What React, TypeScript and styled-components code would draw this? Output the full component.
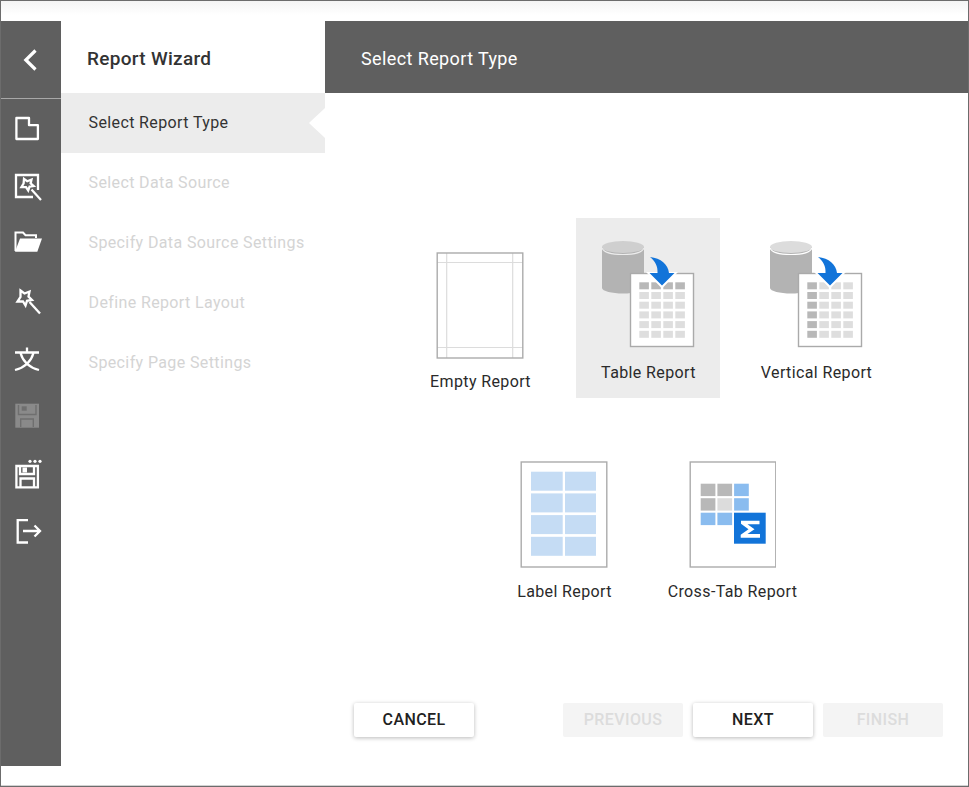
import React from "react";
import styled, { createGlobalStyle } from "styled-components";

const Global = createGlobalStyle`
  html, body { margin: 0; padding: 0; background: #fff; }
  body { font-family: Roboto, "Liberation Sans", sans-serif; color: #212121; }
  * { box-sizing: border-box; }
`;

const Frame = styled.div`
  width: 969px;
  height: 787px;
  border: 1px solid #6c6c6c;
  padding-top: 20px;
  padding-bottom: 20px;
  display: flex;
  overflow: hidden;
  background: linear-gradient(#f4f4f4, #fff 14px);
  box-shadow: inset 0 -1px 0 #d2d2d2;
`;
const Rail = styled.nav`
  width: 60px;
  flex: none;
  background: #5f5f5f;
  display: flex;
  flex-direction: column;
`;
const BackCell = styled.div`
  height: 78px;
  flex: none;
  border-bottom: 1px solid #a8a8a8;
  display: flex;
  align-items: center;
  padding-left: 12px;
`;
const RailCell = styled.div`
  height: 57.7px;
  flex: none;
  display: flex;
  align-items: center;
  padding-left: 12px;
`;
const RailSvg = styled.svg<{ $muted?: boolean }>`
  width: 32px;
  height: 32px;
  display: block;
  overflow: visible;
  color: ${(p) => (p.$muted ? "#8a8a8a" : "#fff")};
`;
const Steps = styled.aside`
  width: 264px;
  flex: none;
  display: flex;
  flex-direction: column;
  background: #fff;
`;
const WizardTitle = styled.div`
  height: 72px;
  flex: none;
  display: flex;
  align-items: center;
  padding: 2px 0 0 26px;
  font-size: 19px;
  font-weight: 500;
  letter-spacing: 0.3px;
  color: #333;
`;
const Step = styled.div<{ $active?: boolean }>`
  height: 60px;
  flex: none;
  display: flex;
  align-items: center;
  padding: 0 0 2px 27.5px;
  font-size: 16px;
  letter-spacing: 0.38px;
  color: ${(p) => (p.$active ? "#333" : "#d4d4d4")};
  background: ${(p) => (p.$active ? "#ececec" : "transparent")};
  position: relative;
`;
const Notch = styled.span`
  position: absolute;
  right: 0;
  top: 15px;
  width: 0;
  height: 0;
  border-top: 15px solid transparent;
  border-bottom: 15px solid transparent;
  border-right: 16px solid #fff;
`;
const Main = styled.main`
  flex: 1;
  display: flex;
  flex-direction: column;
  min-width: 0;
  background: #fff;
`;
const Header = styled.header`
  height: 72px;
  flex: none;
  background: #5f5f5f;
  color: #fff;
  font-size: 18px;
  letter-spacing: 0.39px;
  display: flex;
  align-items: center;
  padding: 2px 0 0 36px;
`;
const Gallery = styled.section`
  flex: none;
  height: 482px;
  padding-top: 125px;
  display: flex;
  flex-direction: column;
  gap: 24px;
  padding-left: 57px;
  width: 588px;
  align-items: center;
`;
const TileRow = styled.div`
  display: flex;
  gap: 24px;
  justify-content: center;
`;
const Tile = styled.div<{ $selected?: boolean; $top: number; $gap: number }>`
  width: 144px;
  height: 180px;
  flex: none;
  display: flex;
  flex-direction: column;
  align-items: center;
  padding-top: ${(p) => p.$top}px;
  gap: ${(p) => p.$gap}px;
  background: ${(p) => (p.$selected ? "#ececec" : "transparent")};
`;
const TileLabel = styled.div`
  font-size: 16px;
  line-height: 20px;
  letter-spacing: 0.38px;
  padding-left: 2px;
  color: #2a2a2a;
  white-space: nowrap;
`;
const Art = styled.svg`
  display: block;
  flex: none;
`;
const Footer = styled.footer`
  display: flex;
  padding: 128px 25px 0 29px;
  justify-content: space-between;
`;
const ButtonGroup = styled.div`
  display: flex;
  gap: 10px;
`;
const WizardButton = styled.button<{ $disabled?: boolean }>`
  width: 120px;
  height: 34px;
  border: 0;
  border-radius: 2px;
  font-family: Roboto, "Liberation Sans", sans-serif;
  font-size: 16px;
  font-weight: 500;
  letter-spacing: 0.4px;
  padding: 0 0 2px;
  background: ${(p) => (p.$disabled ? "#f4f4f4" : "#fff")};
  color: ${(p) => (p.$disabled ? "#dcdcdc" : "#212121")};
  box-shadow: ${(p) =>
    p.$disabled ? "none" : "0 1px 4px rgba(0,0,0,0.28)"};
`;

const S = { fill: "none", stroke: "currentColor", strokeWidth: 2.3 } as const;

const BackIcon = () => (
  <RailSvg viewBox="0 0 32 32">
    <path d="M22.5 6.5 L12.8 16 L22.5 25.5" fill="none" stroke="currentColor" strokeWidth="3.2" />
  </RailSvg>
);
const PageIcon = () => (
  <RailSvg viewBox="0 0 32 32">
    <path d="M3.4 6 H16 V13.2 H24.9 V27 H3.4 Z" {...S} strokeLinejoin="round" />
  </RailSvg>
);
const WizardPageIcon = () => (
  <RailSvg viewBox="0 0 32 32">
    <path d="M25 20 V5 H3 V27 H20" {...S} />
    <path d="M11 8.8 L14.2 11.2 L18.5 9.5 L17.6 13.4 L20.6 16 L16.6 16.6 L15.2 20.5 L13 17.2 L8.4 17.2 L10.6 13.5 Z" fill="none" stroke="currentColor" strokeWidth="2.3" />
    <path d="M18.5 19.5 L28 30" fill="none" stroke="currentColor" strokeWidth="2.2" />
  </RailSvg>
);
const FolderIcon = () => (
  <RailSvg viewBox="0 0 32 32">
    <path d="M2.5 24 V5.5 H10 L12.5 8.2 H23 V11" fill="none" stroke="currentColor" strokeWidth="2" />
    <path d="M7 11.5 H29 L24.3 24.8 H2 Z" fill="currentColor" />
  </RailSvg>
);
const WandIcon = () => (
  <RailSvg viewBox="0 0 32 32">
    <path d="M7.5 5.5 L11.5 8.5 L16.5 6.5 L15.5 11.5 L19 15 L14 15.8 L12.5 20.5 L10 16.5 L4.5 16.5 L7.5 12 Z" fill="none" stroke="currentColor" strokeWidth="2.3" />
    <path d="M16.5 17 L27 28.5" fill="none" stroke="currentColor" strokeWidth="2.3" />
  </RailSvg>
);
const TranslateIcon = () => (
  <RailSvg viewBox="0 0 32 32">
    <path d="M2 9.5 H26 M14 4.5 V9.5 M7.5 10 C9.5 17 14.5 24 26 27 M20.5 10 C18.5 17 13.5 24 2 27" {...S} />
  </RailSvg>
);
const SaveIcon = () => (
  <RailSvg viewBox="0 0 32 32" $muted>
    <rect x="2.3" y="3.7" width="23.7" height="24" fill="currentColor" />
    <path d="M5.5 5 V14.5 H23 V5 M7.7 27 V19 H20.3 V27" fill="none" stroke="#6f6f6f" strokeWidth="1.4" />
    <rect x="8.7" y="6.3" width="5" height="4.4" fill="#6f6f6f" />
  </RailSvg>
);
const SaveAsIcon = () => (
  <RailSvg viewBox="0 0 32 32">
    <path d="M3.4 8 H24.9 V29.3 H3.4 Z M7 8 V16 H21 V8 M7.5 29 V20.5 H21 V29" {...S} />
    <rect x="9.5" y="9.5" width="4.5" height="5" fill="currentColor" />
    <circle cx="17" cy="3.3" r="1.6" fill="currentColor" />
    <circle cx="22" cy="3.3" r="1.6" fill="currentColor" />
    <circle cx="27" cy="3.3" r="1.6" fill="currentColor" />
  </RailSvg>
);
const ExitIcon = () => (
  <RailSvg viewBox="0 0 32 32">
    <path d="M15 4.2 H4.7 V26.5 H15 M10 15 H27 M21.5 9.5 L27 15 L21.5 20.5" {...S} />
  </RailSvg>
);

const EmptyArt = () => (
  <Art width="88" height="107" viewBox="0 0 88 107">
    <path d="M10.7 1 V106 M76.7 1 V106 M1 10.5 H87 M1 95.5 H87" stroke="#dcdcdc" strokeWidth="1.2" fill="none" />
    <rect x="1.2" y="1" width="85.6" height="105" fill="none" stroke="#ababab" strokeWidth="1.4" />
  </Art>
);

const DataArt = ({ vertical }: { vertical?: boolean }) => {
  const cols = [0, 1, 2, 3];
  const rows = [0, 1, 2, 3, 4, 5];
  return (
    <Art width="96" height="110" viewBox="0 0 96 110">
      <path d="M2 7 V48 C2 51 12 53.5 23 53.5 C34 53.5 44 51 44 48 V7 Z" fill="#b3b3b3" />
      <ellipse cx="23" cy="7" rx="21" ry="6" fill={vertical ? "#dcdcdc" : "#cfcfcf"} />
      <path d="M2 8 C4 13 12 14.5 23 14.5 C34 14.5 42 13 44 8" fill="none" stroke={vertical ? "#fff" : "#ececec"} strokeWidth="1.2" />
      <rect x="30.5" y="33.5" width="63" height="73" fill="#fff" stroke="#aaaaaa" strokeWidth="1.4" />
      {rows.map((r) =>
        cols.map((c) => {
          const dark = vertical ? c === 0 : r === 0;
          return (
            <rect
              key={`${r}-${c}`}
              x={39.3 + c * 12}
              y={42.3 + r * 9.7}
              width="9.6"
              height="7"
              fill={dark ? "#b8b8b8" : "#dedede"}
            />
          );
        })
      )}
      <path d="M46 32 L62 48.5 L78 32 Z" fill="#fff" />
      <path d="M50 17 C61 18.5 68 24 69 33 H74.5 L62 45.5 L49.5 33 H57.5 C58 26 55 21 50 17 Z" fill="#1274d9" />
    </Art>
  );
};

const LabelArt = () => (
  <Art width="88" height="107" viewBox="0 0 88 107">
    <rect x="1.2" y="1" width="85.6" height="105" fill="#fff" stroke="#ababab" strokeWidth="1.4" />
    {[0, 1, 2, 3].map((r) =>
      [0, 1].map((c) => (
        <rect key={`${r}-${c}`} x={c === 0 ? 11 : 45} y={10.7 + r * 21.7} width={c === 0 ? 31.7 : 31} height="19" fill="#c5dcf4" />
      ))
    )}
  </Art>
);

const CrossArt = () => {
  const cells: [number, number, string][] = [
    [0, 0, "#b8b8b8"], [1, 0, "#b8b8b8"], [2, 0, "#8abcef"],
    [0, 1, "#b8b8b8"], [1, 1, "#dcdcdc"], [2, 1, "#8abcef"],
    [0, 2, "#8abcef"], [1, 2, "#8abcef"],
  ];
  return (
    <Art width="88" height="107" viewBox="-1 0 88 107">
      <rect x="1.2" y="1" width="85.6" height="105" fill="#fff" stroke="#ababab" strokeWidth="1.4" />
      {cells.map(([c, r, f]) => (
        <rect key={`${c}-${r}`} x={11.7 + c * 16.7} y={22.7 + r * 14.5} width="14.7" height="12.4" fill={f} />
      ))}
      <rect x="45" y="51.7" width="31.7" height="31" fill="#1274d9" />
      <path d="M52 59.7 H70.5 V63.2 H58.5 L65.5 68.2 L58.5 73 H71 V76.7 H51.7 V73.8 L59.5 68.2 L52 62.8 Z" fill="#fff" />
    </Art>
  );
};

export default function App() {
  return (
    <>
      <Global />
      <Frame>
        <Rail>
          <BackCell><BackIcon /></BackCell>
          <RailCell><PageIcon /></RailCell>
          <RailCell><WizardPageIcon /></RailCell>
          <RailCell><FolderIcon /></RailCell>
          <RailCell><WandIcon /></RailCell>
          <RailCell><TranslateIcon /></RailCell>
          <RailCell><SaveIcon /></RailCell>
          <RailCell><SaveAsIcon /></RailCell>
          <RailCell><ExitIcon /></RailCell>
        </Rail>
        <Steps>
          <WizardTitle>Report Wizard</WizardTitle>
          <Step $active>Select Report Type<Notch /></Step>
          <Step>Select Data Source</Step>
          <Step>Specify Data Source Settings</Step>
          <Step>Define Report Layout</Step>
          <Step>Specify Page Settings</Step>
        </Steps>
        <Main>
          <Header>Select Report Type</Header>
          <Gallery>
            <TileRow>
              <Tile $top={34} $gap={13}><EmptyArt /><TileLabel>Empty Report</TileLabel></Tile>
              <Tile $selected $top={22} $gap={13}><DataArt /><TileLabel>Table Report</TileLabel></Tile>
              <Tile $top={22} $gap={13}><DataArt vertical /><TileLabel>Vertical Report</TileLabel></Tile>
            </TileRow>
            <TileRow>
              <Tile $top={39} $gap={14}><LabelArt /><TileLabel>Label Report</TileLabel></Tile>
              <Tile $top={39} $gap={14}><CrossArt /><TileLabel>Cross-Tab Report</TileLabel></Tile>
            </TileRow>
          </Gallery>
          <Footer>
            <WizardButton>CANCEL</WizardButton>
            <ButtonGroup>
              <WizardButton $disabled>PREVIOUS</WizardButton>
              <WizardButton>NEXT</WizardButton>
              <WizardButton $disabled>FINISH</WizardButton>
            </ButtonGroup>
          </Footer>
        </Main>
      </Frame>
    </>
  );
}
